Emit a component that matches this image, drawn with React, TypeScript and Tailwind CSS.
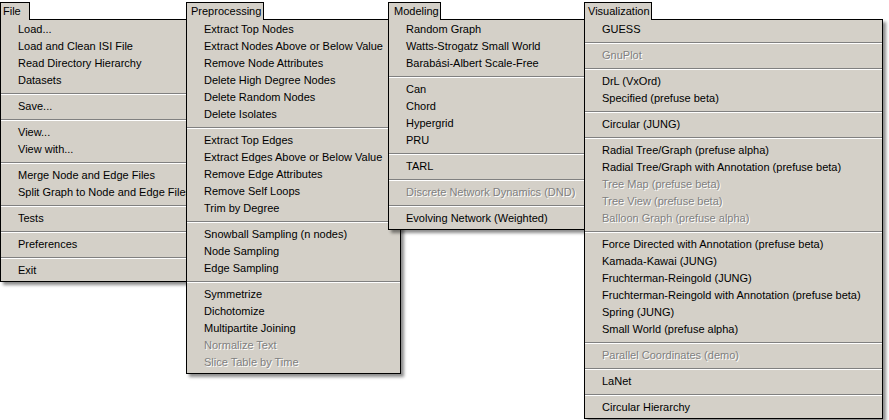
import React from "react";

type Item = { label: string; disabled?: boolean } | "sep";

type MenuProps = {
  title: string;
  tabWidth: number;
  tabPad: string;
  width: string;
  offset: string;
  items: Item[];
};

const sep = "sep" as const;

function Menu({ title, tabPad, width, offset, items, tabWidth }: MenuProps) {
  return (
    <div className={`flex flex-col ${width} ${offset}`}>
      <div
        className={`relative z-[1] -mb-px h-[18px] border-x border-t border-black bg-[#d4d0c8] leading-[16px] ${tabPad}`}
        style={{ width: tabWidth }}
      >
        {title}
      </div>
      <div className="border border-black bg-[#d4d0c8] pt-px pb-[2px] shadow-[3px_3px_3px_rgba(0,0,0,0.45)]">
        {items.map((it, i) =>
          it === "sep" ? (
            <div key={i} className="mt-[4px] mb-[3px]">
              <div className="h-px bg-[#808080]" />
              <div className="h-px bg-white" />
            </div>
          ) : (
            <div
              key={i}
              className={`h-[17px] pl-[17px] leading-[17px] whitespace-nowrap ${
                it.disabled
                  ? "text-[#808080] [text-shadow:1px_1px_0_#ffffff]"
                  : "text-black"
              }`}
            >
              {it.label}
            </div>
          )
        )}
      </div>
    </div>
  );
}

const fileItems: Item[] = [
  { label: "Load..." },
  { label: "Load and Clean ISI File" },
  { label: "Read Directory Hierarchy" },
  { label: "Datasets" },
  sep,
  { label: "Save..." },
  sep,
  { label: "View..." },
  { label: "View with..." },
  sep,
  { label: "Merge Node and Edge Files" },
  { label: "Split Graph to Node and Edge Files" },
  sep,
  { label: "Tests" },
  sep,
  { label: "Preferences" },
  sep,
  { label: "Exit" },
];

const preItems: Item[] = [
  { label: "Extract Top Nodes" },
  { label: "Extract Nodes Above or Below Value" },
  { label: "Remove Node Attributes" },
  { label: "Delete High Degree Nodes" },
  { label: "Delete Random Nodes" },
  { label: "Delete Isolates" },
  sep,
  { label: "Extract Top Edges" },
  { label: "Extract Edges Above or Below Value" },
  { label: "Remove Edge Attributes" },
  { label: "Remove Self Loops" },
  { label: "Trim by Degree" },
  sep,
  { label: "Snowball Sampling (n nodes)" },
  { label: "Node Sampling" },
  { label: "Edge Sampling" },
  sep,
  { label: "Symmetrize" },
  { label: "Dichotomize" },
  { label: "Multipartite Joining" },
  { label: "Normalize Text", disabled: true },
  { label: "Slice Table by Time", disabled: true },
];

const modelItems: Item[] = [
  { label: "Random Graph" },
  { label: "Watts-Strogatz Small World" },
  { label: "Barabási-Albert Scale-Free" },
  sep,
  { label: "Can" },
  { label: "Chord" },
  { label: "Hypergrid" },
  { label: "PRU" },
  sep,
  { label: "TARL" },
  sep,
  { label: "Discrete Network Dynamics (DND)", disabled: true },
  sep,
  { label: "Evolving Network (Weighted)" },
];

const visItems: Item[] = [
  { label: "GUESS" },
  sep,
  { label: "GnuPlot", disabled: true },
  sep,
  { label: "DrL (VxOrd)" },
  { label: "Specified (prefuse beta)" },
  sep,
  { label: "Circular (JUNG)" },
  sep,
  { label: "Radial Tree/Graph (prefuse alpha)" },
  { label: "Radial Tree/Graph with Annotation (prefuse beta)" },
  { label: "Tree Map (prefuse beta)", disabled: true },
  { label: "Tree View (prefuse beta)", disabled: true },
  { label: "Balloon Graph (prefuse alpha)", disabled: true },
  sep,
  { label: "Force Directed with Annotation (prefuse beta)" },
  { label: "Kamada-Kawai (JUNG)" },
  { label: "Fruchterman-Reingold (JUNG)" },
  { label: "Fruchterman-Reingold with Annotation (prefuse beta)" },
  { label: "Spring (JUNG)" },
  { label: "Small World (prefuse alpha)" },
  sep,
  { label: "Parallel Coordinates (demo)", disabled: true },
  sep,
  { label: "LaNet" },
  sep,
  { label: "Circular Hierarchy" },
];

export default function App() {
  return (
    <div className="h-[420px] w-[889px] overflow-hidden bg-white font-['Liberation_Sans',Arial,sans-serif] text-[11px]">
      <div className="flex items-start pt-[2px]">
        <Menu title="File" tabWidth={30} tabPad="pl-[2px]" width="w-[192px]" offset="" items={fileItems} />
        <Menu title="Preprocessing" tabWidth={78} tabPad="pl-[4px]" width="w-[215px]" offset="-ml-[6px]" items={preItems} />
        <Menu title="Modeling" tabWidth={53} tabPad="pl-[5px]" width="w-[197px]" offset="-ml-[13px]" items={modelItems} />
        <Menu title="Visualization" tabWidth={68} tabPad="pl-[3px]" width="w-[299px]" offset="-ml-[1px]" items={visItems} />
      </div>
    </div>
  );
}
